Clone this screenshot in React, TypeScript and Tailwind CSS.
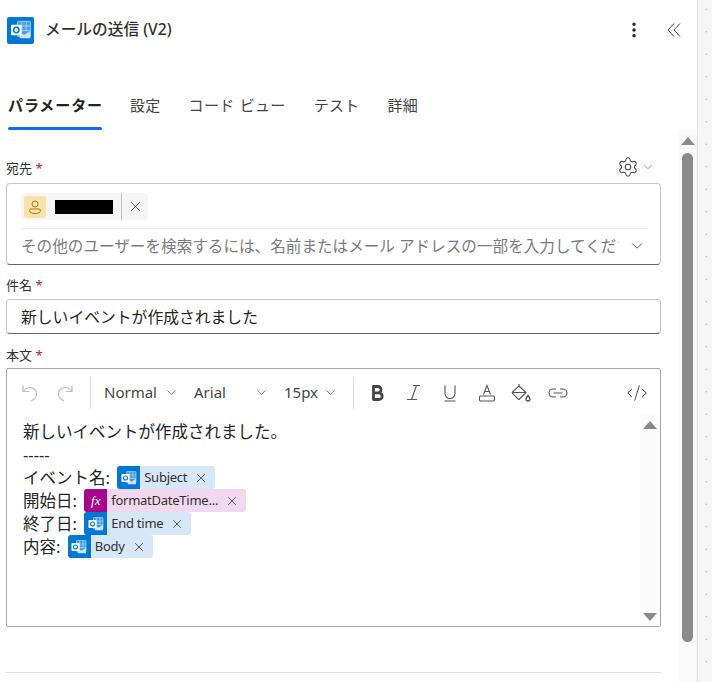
import { ChevronDown, CodeXml, EllipsisVertical, Settings, X } from "lucide-react"

const font = "font-['Noto_Sans','Noto_Sans_CJK_JP',sans-serif]"

function OutlookIcon({ size = 18 }: { size?: number }) {
  return (
    <svg width={size} height={size} viewBox="0 0 18 18" fill="none">
      <rect x="6.500" y="2.500" width="9.500" height="11.500" rx="0.500" fill="#4a9ce0" stroke="#b9daf5" strokeWidth="0.600" />
      <path d="M6.500 6h9.500M6.500 9.500h9.500M9.700 2.500v7M12.900 2.500v7" stroke="#b9daf5" strokeWidth="0.600" />
      <path d="M8 10.500l3.500 2.200 4.500-3v5a.5.5 0 0 1-.5.500H8z" fill="#cfe4f7" />
      <rect x="1.500" y="5" width="8" height="8" rx="0.800" fill="#fff" />
      <circle cx="5.500" cy="9" r="2" stroke="#0078d4" strokeWidth="1.100" />
    </svg>
  )
}

function Label({ children }: { children: string }) {
  return (
    <div className="text-[13px] leading-[18px] text-[#333]">
      {children} <span className="text-[#a4262c]">*</span>
    </div>
  )
}

function Token({ label, fx }: { label: string; fx?: boolean }) {
  return (
    <span className={`ml-[3px] inline-flex h-[23px] items-center rounded-[3px] align-top ${fx ? "bg-[#f2d8ee]" : "bg-[#d6e8f8]"}`}>
      <span className={`flex h-[23px] w-[23px] items-center justify-center rounded-l-[3px] ${fx ? "bg-[#a5068d]" : "bg-[#0078d4]"}`}>
        {fx ? (
          <span className="font-['Liberation_Serif',serif] text-[13px] italic text-white">fx</span>
        ) : (
          <OutlookIcon size={18} />
        )}
      </span>
      <span className="ml-[4px] text-[13px] leading-[23px] tracking-[-0.25px] text-[#323130]">{label}</span>
      <X className="mr-[7px] ml-[7px] size-[14px] text-[#444]" strokeWidth={1.5} />
    </span>
  )
}

function ToolChevron() {
  return <ChevronDown className="size-[15px] text-[#555]" strokeWidth={1.3} />
}

export default function App() {
  return (
    <div className={`flex h-[682px] w-[712px] overflow-hidden bg-white ${font}`}>
      <div className="flex w-[697px] shrink-0 flex-col">
        {/* header */}
        <div className="flex h-[60px] shrink-0 items-center pr-[16px] pl-[7px]">
          <div className="flex size-[27px] items-center justify-center rounded-[2px] bg-[#0078d4]">
            <OutlookIcon size={24} />
          </div>
          <div className="ml-[11px] flex-1 text-[15.700px] font-medium text-[#323130]">メールの送信 (V2)</div>
          <EllipsisVertical className="mr-[1px] size-[20px] text-[#242424]" strokeWidth={2.2} />
          <svg className="ml-[22px]" width="14" height="16" viewBox="0 0 14 16" fill="none" stroke="#444" strokeWidth="1">
            <path d="M7 1.500L1 8l6 6.500M13 1.500L7 8l6 6.500" />
          </svg>
        </div>

        {/* tabs */}
        <div className="flex h-[70px] shrink-0 items-start gap-[28px] pt-[34px] pl-[8px] text-[15px] leading-[22px] tracking-[0.3px] text-[#424242]">
          <div className="flex h-[36px] w-[94px] flex-col justify-between">
            <span className="font-bold tracking-[0.9px] whitespace-nowrap text-[#242424]">パラメーター</span>
            <span className="h-[3px] rounded-full bg-[#0f6cf0]" />
          </div>
          <span>設定</span>
          <span className="whitespace-nowrap [word-spacing:1px]">コード ビュー</span>
          <span>テスト</span>
          <span>詳細</span>
        </div>

        {/* body */}
        <div className="flex min-h-0 flex-1">
          <div className="min-w-0 flex-1 pt-[26px] pr-[17px] pl-[6px]">
            <div className="flex h-[27px] items-start justify-between">
              <div className="pt-[3px]">
                <Label>宛先</Label>
              </div>
              <div className="flex items-center pr-[6px]">
                <Settings className="size-[22px] text-[#444]" strokeWidth={1.1} />
                <ChevronDown className="ml-[2px] size-[14px] text-[#666]" strokeWidth={1.2} />
              </div>
            </div>

            <div className="h-[82px] rounded-[4px] border border-[#c8c8c8] border-b-[#666] px-[14px] pt-[9px]">
              <div className="flex h-[27px] w-[127px] items-center rounded-[4px] bg-[#f5f5f5] pl-[3px]">
                <span className="flex size-[22px] items-center justify-center rounded-[2px] bg-[#fbe2a9]">
                  <svg width="16" height="16" viewBox="0 0 16 16" fill="none" stroke="#a8761a" strokeWidth="1">
                    <circle cx="8" cy="5" r="3" />
                    <path d="M2.500 11.500a1.500 1.500 0 0 1 1.500-1.500h8a1.500 1.500 0 0 1 1.500 1.500c0 2-2.400 3-5.500 3s-5.500-1-5.500-3z" />
                  </svg>
                </span>
                <span className="ml-[9px] h-[14px] w-[58px] bg-black" />
                <span className="ml-[8px] flex h-[27px] flex-1 items-center justify-center border-l border-[#bdbdbd]">
                  <X className="size-[17px] text-[#444]" strokeWidth={1.1} />
                </span>
              </div>
              <div className="mt-[8px] flex items-center justify-between border-t border-[#ececec] pt-[6px]">
                <span className="w-[598px] overflow-hidden text-[15.600px] leading-[22px] whitespace-nowrap text-[#7a7a7a]">
                  その他のユーザーを検索するには、名前またはメール アドレスの一部を入力してください
                </span>
                <ChevronDown className="size-[18px] text-[#555]" strokeWidth={1.3} />
              </div>
            </div>

            <div className="mt-[11px] h-[23px]">
              <Label>件名</Label>
            </div>
            <div className="h-[35px] rounded-[4px] border border-[#c8c8c8] border-b-[#666] px-[14px] text-[15.800px] leading-[35px] text-[#242424]">
              新しいイベントが作成されました
            </div>

            <div className="mt-[12px] h-[22px]">
              <Label>本文</Label>
            </div>
            <div className="flex h-[259px] flex-col rounded-[2px] border border-[#a8a8a8]">
              {/* toolbar */}
              <div className="flex h-[46px] shrink-0 items-center pt-[1px] pl-[14px] text-[15px] text-[#444]">
                <svg width="18" height="20" viewBox="0 0 18 20" fill="none" stroke="#bdbdbd" strokeWidth="1.200">
                  <path d="M2 2.500v6h6M2 8.500c2-2.500 4-4 7-4 3.500 0 6.500 2.500 6.500 6 0 3.500-2.500 6-5.500 7.500" />
                </svg>
                <svg className="ml-[17px]" width="18" height="20" viewBox="0 0 18 20" fill="none" stroke="#bdbdbd" strokeWidth="1.200">
                  <path d="M16 2.500v6h-6M16 8.500c-2-2.500-4-4-7-4-3.500 0-6.500 2.500-6.500 6 0 3.500 2.500 6 5.500 7.500" />
                </svg>
                <span className="ml-[16px] h-[32px] w-px bg-[#ddd]" />
                <span className="ml-[13px]">Normal</span>
                <span className="ml-[7px]">
                  <ToolChevron />
                </span>
                <span className="ml-[15px] w-[60px]">Arial</span>
                <ToolChevron />
                <span className="ml-[15px]">15px</span>
                <span className="ml-[5px]">
                  <ToolChevron />
                </span>
                <span className="ml-[15px] h-[32px] w-px bg-[#ddd]" />
                <svg className="ml-[14px]" width="20" height="20" viewBox="0 0 20 20" fill="none" stroke="#444" strokeWidth="2.800">
                  <path d="M5.500 3.500h4.500a3 3 0 0 1 0 6.300H5.500zM5.500 9.800h5.300a3.300 3.300 0 0 1 0 6.700H5.500z" strokeLinejoin="round" />
                </svg>
                <svg className="ml-[16px]" width="20" height="20" viewBox="0 0 20 20" fill="none" stroke="#555" strokeWidth="1.100">
                  <path d="M9 2.500h7M12.500 2.500L7.500 16.500M3 16.500h10" />
                </svg>
                <svg className="ml-[16px]" width="20" height="20" viewBox="0 0 20 20" fill="none" stroke="#555" strokeWidth="1.100">
                  <path d="M5 2.500v8a5 5 0 0 0 10 0v-8M4.500 18h11" />
                </svg>
                <svg className="ml-[17px]" width="20" height="20" viewBox="0 0 20 20" fill="none" stroke="#555" strokeWidth="1.100">
                  <path d="M6.500 11.500L10 2.500l3.500 9M7.800 8.500h4.400" />
                  <rect x="2.500" y="13" width="15" height="5" rx="1.200" />
                </svg>
                <svg className="ml-[13px]" width="22" height="20" viewBox="0 0 22 20" fill="none" stroke="#555" strokeWidth="1.100">
                  <path d="M9 3l7 6.500-6.500 6.500a1 1 0 0 1-1.400 0L2.500 10.400a1 1 0 0 1 0-1.400zM2.500 9.500h13.500" />
                  <path d="M9 1v3" />
                  <path d="M18 12.500c1.300 1.700 2 2.700 2 3.500a2 2 0 0 1-4 0c0-.8.700-1.800 2-3.500z" strokeWidth="1.300" />
                </svg>
                <svg className="ml-[15px]" width="22" height="20" viewBox="0 0 22 20" fill="none" stroke="#555" strokeWidth="1.100">
                  <path d="M9 6H6a4 4 0 0 0 0 8h3M13 6h3a4 4 0 0 1 0 8h-3M6.500 10h9" />
                </svg>
                <CodeXml className="ml-[57px] size-[22px] text-[#555]" strokeWidth={1.1} />
              </div>

              {/* editor */}
              <div className="flex min-h-0 flex-1">
                <div className="flex-1 pt-[5px] pl-[16px] text-[16.500px] leading-[23px] text-[#242424]">
                  <div>新しいイベントが作成されました。</div>
                  <div>-----</div>
                  <div>
                    イベント名: <Token label="Subject" />
                  </div>
                  <div>
                    開始日: <Token label="formatDateTime..." fx />
                  </div>
                  <div>
                    終了日: <Token label="End time" />
                  </div>
                  <div>
                    内容: <Token label="Body" />
                  </div>
                </div>
                <div className="flex w-[20px] shrink-0 flex-col items-center justify-between bg-[#fbfbfb] pt-[6px] pb-[5px]">
                  <span className="size-0 border-x-[7px] border-b-[8px] border-x-transparent border-b-[#8a8a8a]" />
                  <span className="size-0 border-x-[7px] border-t-[8px] border-x-transparent border-t-[#8a8a8a]" />
                </div>
              </div>
            </div>

            <div className="mt-[45px] h-px bg-[#dedede]" />
          </div>

          {/* page scrollbar */}
          <div className="flex w-[19px] shrink-0 flex-col items-center bg-[#fafafa] pt-[7px]">
            <span className="size-0 border-x-[7px] border-b-[8px] border-x-transparent border-b-[#8a8a8a]" />
            <span className="mt-[8px] h-[489px] w-[11px] rounded-full bg-[#8a8a8a]" />
          </div>
        </div>
      </div>

      {/* canvas behind the panel */}
      <div className="flex-1 border-l border-[#e2e2e2] bg-[#f6f6f6] bg-[radial-gradient(circle,#999_0.6px,transparent_1px)] bg-[length:22.500px_22.500px] bg-[position:-3px_-2px]" />
    </div>
  )
}
